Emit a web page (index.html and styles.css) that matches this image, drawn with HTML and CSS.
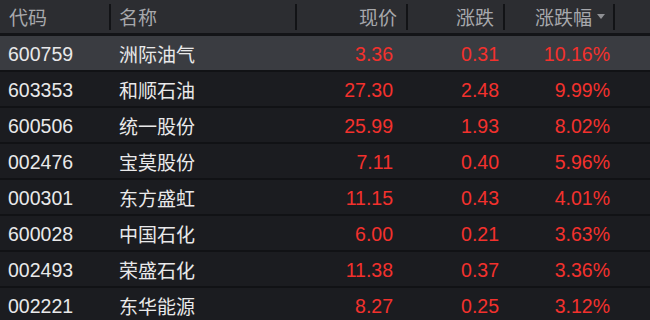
FILE: index.html
```html
<!DOCTYPE html>
<html lang="zh-CN">
<head>
<meta charset="utf-8">
<link rel="stylesheet" href="styles.css">
</head>
<body>
<div class="table">
  <div class="row head">
    <div class="hc"><div class="hl left">代码</div></div>
    <div class="hc"><div class="hl left pad-name">名称</div></div>
    <div class="hc"><div class="hl right">现价</div></div>
    <div class="hc"><div class="hl right">涨跌</div></div>
    <div class="hc"><div class="hl right">涨跌幅<span class="caret"></span></div></div>
    <div class="hc"></div>
  </div>
  <div class="row sel">
    <div class="c code">600759</div><div class="c name">洲际油气</div><div class="c num price">3.36</div><div class="c num chg">0.31</div><div class="c num pct">10.16%</div><div class="c"></div>
  </div>
  <div class="row">
    <div class="c code">603353</div><div class="c name">和顺石油</div><div class="c num price">27.30</div><div class="c num chg">2.48</div><div class="c num pct">9.99%</div><div class="c"></div>
  </div>
  <div class="row">
    <div class="c code">600506</div><div class="c name">统一股份</div><div class="c num price">25.99</div><div class="c num chg">1.93</div><div class="c num pct">8.02%</div><div class="c"></div>
  </div>
  <div class="row">
    <div class="c code">002476</div><div class="c name">宝莫股份</div><div class="c num price">7.11</div><div class="c num chg">0.40</div><div class="c num pct">5.96%</div><div class="c"></div>
  </div>
  <div class="row">
    <div class="c code">000301</div><div class="c name">东方盛虹</div><div class="c num price">11.15</div><div class="c num chg">0.43</div><div class="c num pct">4.01%</div><div class="c"></div>
  </div>
  <div class="row">
    <div class="c code">600028</div><div class="c name">中国石化</div><div class="c num price">6.00</div><div class="c num chg">0.21</div><div class="c num pct">3.63%</div><div class="c"></div>
  </div>
  <div class="row">
    <div class="c code">002493</div><div class="c name">荣盛石化</div><div class="c num price">11.38</div><div class="c num chg">0.37</div><div class="c num pct">3.36%</div><div class="c"></div>
  </div>
  <div class="row">
    <div class="c code">002221</div><div class="c name">东华能源</div><div class="c num price">8.27</div><div class="c num chg">0.25</div><div class="c num pct">3.12%</div><div class="c"></div>
  </div>
</div>
</body>
</html>
```

FILE: styles.css
```css
html, body {
  margin: 0;
  padding: 0;
  background: #1b1c20;
}
body {
  width: 650px;
  height: 320px;
  overflow: hidden;
  font-family: "Liberation Sans", "Noto Sans CJK SC", sans-serif;
}
.table {
  display: flex;
  flex-direction: column;
}
.row {
  display: grid;
  grid-template-columns: 111px 186px 111px 97px 110px 1fr;
  height: 34px;
  background: #1b1c20;
  border-bottom: 2px solid #111215;
}
.row.head {
  height: 33px;
  background: #2c2d31;
  border-bottom: 3px solid #131417;
}
.row.sel {
  background: #3a3c41;
}
.hc {
  display: flex;
  align-items: center;
}
.hl {
  flex: 1;
  height: 26px;
  display: flex;
  align-items: center;
  border-right: 2px solid #121316;
  font-family: "Noto Sans CJK SC", sans-serif;
  font-size: 19px;
  color: #a7a8ac;
  box-sizing: border-box;
}
.hl.left {
  justify-content: flex-start;
  padding-left: 9px;
}
.hl.left.pad-name {
  padding-left: 8px;
}
.hl.right {
  justify-content: flex-end;
  padding-right: 9px;
}
.caret {
  display: inline-block;
  width: 0;
  height: 0;
  margin-left: 5px;
  margin-right: -1px;
  border-left: 4px solid transparent;
  border-right: 4px solid transparent;
  border-top: 5px solid #8e8f93;
}
.c {
  padding-top: 1px;
  line-height: 34px;
  font-size: 19.5px;
  white-space: nowrap;
}
.code {
  padding-left: 8px;
  color: #e9e9ea;
}
.name {
  padding-left: 8px;
  color: #e9e9ea;
  font-family: "Noto Sans CJK SC", sans-serif;
  font-size: 19px;
}
.num {
  text-align: right;
  color: #f3312d;
}
.price {
  padding-right: 15px;
}
.chg {
  padding-right: 6px;
}
.pct {
  padding-right: 5px;
}
```
